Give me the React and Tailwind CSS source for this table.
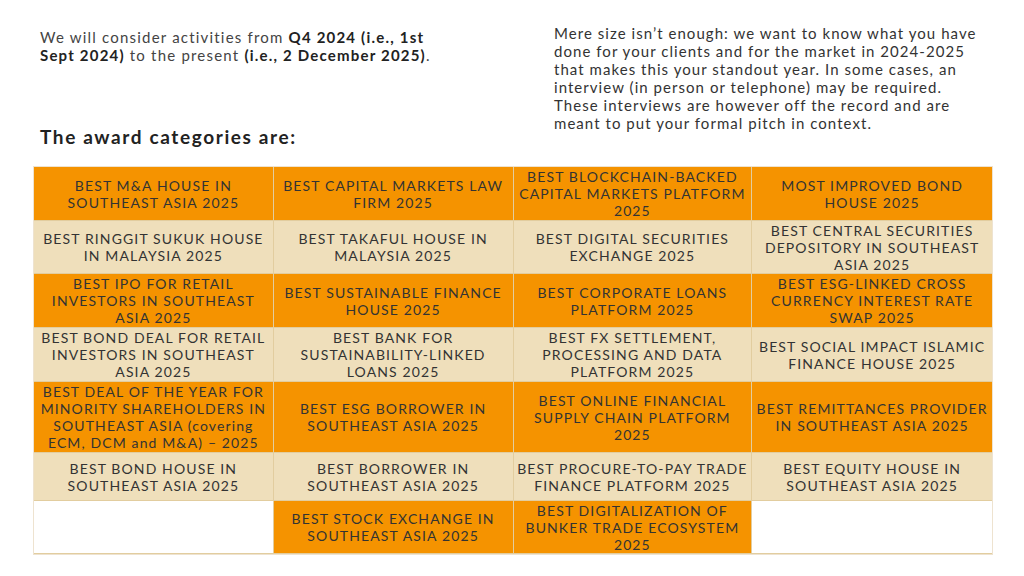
import React from "react";

const O = "bg-[#f59300]";
const B = "bg-[#efdfbb]";
const W = "bg-white";

const rows = [
  { h: "h-[54px]", cells: [
    [O, ["BEST M&A HOUSE IN", "SOUTHEAST ASIA 2025"]],
    [O, ["BEST CAPITAL MARKETS LAW", "FIRM 2025"]],
    [O, ["BEST BLOCKCHAIN-BACKED", "CAPITAL MARKETS PLATFORM", "2025"]],
    [O, ["MOST IMPROVED BOND", "HOUSE 2025"]],
  ]},
  { h: "h-[53px]", cells: [
    [B, ["BEST RINGGIT SUKUK HOUSE", "IN MALAYSIA 2025"]],
    [B, ["BEST TAKAFUL HOUSE IN", "MALAYSIA 2025"]],
    [B, ["BEST DIGITAL SECURITIES", "EXCHANGE 2025"]],
    [B, ["BEST CENTRAL SECURITIES", "DEPOSITORY IN SOUTHEAST", "ASIA 2025"]],
  ]},
  { h: "h-[54px]", cells: [
    [O, ["BEST IPO FOR RETAIL", "INVESTORS IN SOUTHEAST", "ASIA 2025"]],
    [O, ["BEST SUSTAINABLE FINANCE", "HOUSE 2025"]],
    [O, ["BEST CORPORATE LOANS", "PLATFORM 2025"]],
    [O, ["BEST ESG-LINKED CROSS", "CURRENCY INTEREST RATE", "SWAP 2025"]],
  ]},
  { h: "h-[54px]", cells: [
    [B, ["BEST BOND DEAL FOR RETAIL", "INVESTORS IN SOUTHEAST", "ASIA 2025"]],
    [B, ["BEST BANK FOR", "SUSTAINABILITY-LINKED", "LOANS 2025"]],
    [B, ["BEST FX SETTLEMENT,", "PROCESSING AND DATA", "PLATFORM 2025"]],
    [B, ["BEST SOCIAL IMPACT ISLAMIC", "FINANCE HOUSE 2025"]],
  ]},
  { h: "h-[71px]", cells: [
    [O, ["BEST DEAL OF THE YEAR FOR", "MINORITY SHAREHOLDERS IN", "SOUTHEAST ASIA (covering", "ECM, DCM and M&A) – 2025"]],
    [O, ["BEST ESG BORROWER IN", "SOUTHEAST ASIA 2025"]],
    [O, ["BEST ONLINE FINANCIAL", "SUPPLY CHAIN PLATFORM", "2025"]],
    [O, ["BEST REMITTANCES PROVIDER", "IN SOUTHEAST ASIA 2025"]],
  ]},
  { h: "h-[48px]", cells: [
    [B, ["BEST BOND HOUSE IN", "SOUTHEAST ASIA 2025"]],
    [B, ["BEST BORROWER IN", "SOUTHEAST ASIA 2025"]],
    [B, ["BEST PROCURE-TO-PAY TRADE", "FINANCE PLATFORM 2025"]],
    [B, ["BEST EQUITY HOUSE IN", "SOUTHEAST ASIA 2025"]],
  ]},
  { h: "h-[53px]", cells: [
    [W, []],
    [O, ["BEST STOCK EXCHANGE IN", "SOUTHEAST ASIA 2025"]],
    [O, ["BEST DIGITALIZATION OF", "BUNKER TRADE ECOSYSTEM", "2025"]],
    [W, []],
  ]},
];

const widths = ["w-[240px]", "w-[240px]", "w-[239px]", "w-[240px]"];

export default function App() {
  return (
    <div
      className="w-[1024px] h-[576px] bg-white overflow-hidden text-[#333]"
      style={{ fontFamily: "Lato, 'Open Sans', sans-serif" }}
    >
      <div className="flex h-[166px]">
        <div className="w-[514px] pl-[40px] pt-[28px]">
          <p className="text-[15px] leading-[18.3px] tracking-[0.08em] text-[#444] whitespace-nowrap">
            We will consider activities from <b className="text-[#222]">Q4 2024 (i.e., 1st</b>
            <br />
            <b className="text-[#222]">Sept 2024)</b> to the present <b className="text-[#222]">(i.e., 2 December 2025)</b>.
          </p>
          <h2 className="mt-[61px] text-[19px] leading-[22px] font-bold tracking-[0.085em] text-[#222] whitespace-nowrap">
            The award categories are:
          </h2>
        </div>
        <div className="pl-[40px] pt-[24px]">
          <p className="text-[15px] leading-[18px] tracking-[0.07em] text-[#333] whitespace-nowrap">
            Mere size isn’t enough: we want to know what you have
            <br />
            done for your clients and for the market in 2024-2025
            <br />
            that makes this your standout year. In some cases, an
            <br />
            interview (in person or telephone) may be required.
            <br />
            These interviews are however off the record and are
            <br />
            meant to put your formal pitch in context.
          </p>
        </div>
      </div>
      <div className="ml-[33px] w-[960px] border border-[#eee3d0] flex flex-col">
        {rows.map((r, i) => (
          <div key={i} className={`flex ${r.h}`}>
            {r.cells.map(([bg, lines], j) => (
              <div
                key={j}
                className={`${widths[j]} ${bg} flex flex-col items-center justify-center text-center text-[14px] leading-[17px] tracking-[0.08em] text-[#333] whitespace-nowrap border-b border-r border-[#e2cd9f] last:border-r-0`}
              >
                {lines.map((l, k) => (
                  <span key={k}>{l}</span>
                ))}
              </div>
            ))}
          </div>
        ))}
      </div>
    </div>
  );
}
